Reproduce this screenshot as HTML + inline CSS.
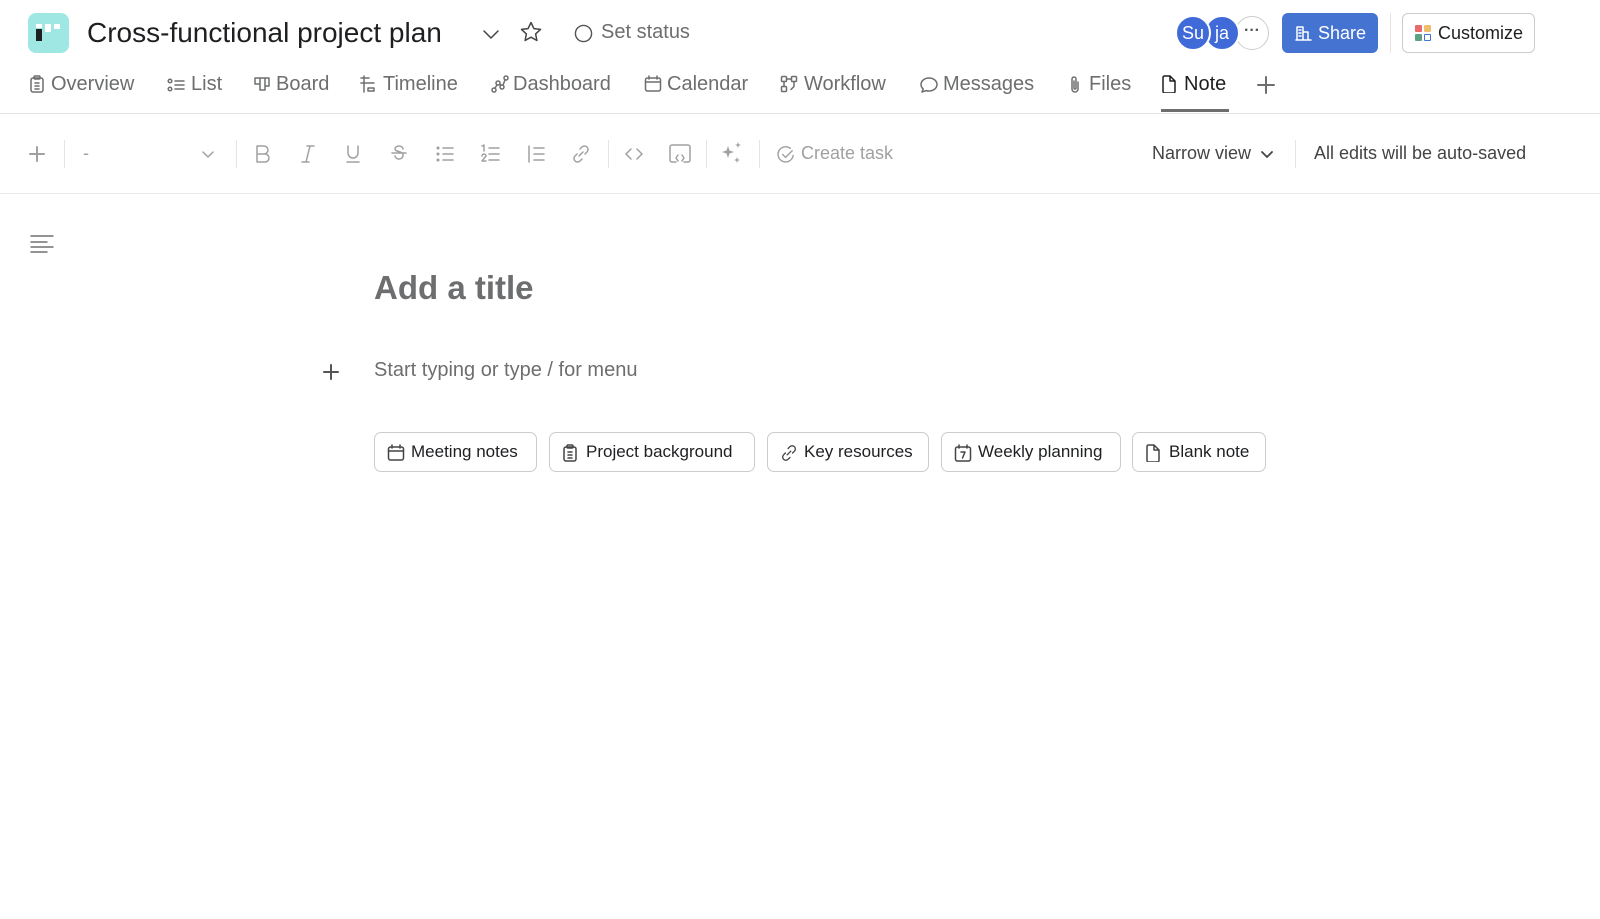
<!DOCTYPE html>
<html><head><meta charset="utf-8"><style>
*{margin:0;padding:0;box-sizing:border-box}
body{width:1600px;height:919px;background:#fff;font-family:"Liberation Sans",sans-serif;position:relative;overflow:hidden;color:#1e1f21}
.a{position:absolute;white-space:nowrap}
.tab{position:absolute;top:72px;font-size:20px;color:#6d6e6f;line-height:24px}
.ic{position:absolute}
svg{fill:none;stroke:currentColor;stroke-width:1.5;stroke-linecap:round;stroke-linejoin:round}
.tb{position:absolute;top:142px;color:#a2a0a2}
.sep{position:absolute;width:1px;background:#e6e4e4}
.chip{position:absolute;top:432px;height:40px;border:1px solid #cfcbcb;border-radius:7px;font-size:17px;color:#1e1f21;line-height:38px;padding-left:36px}
.chip svg{position:absolute;left:12px;top:11px;color:#444}
</style></head><body>
<!-- logo -->
<div class="a" style="left:28px;top:13px;width:41px;height:40px;background:#9ee7e3;border-radius:8px"></div>
<div class="a" style="left:36px;top:29px;width:6px;height:12px;background:#1e1f21"></div>
<div class="a" style="left:36px;top:24px;width:6px;height:4px;background:#fff"></div>
<div class="a" style="left:45px;top:24px;width:6px;height:8px;background:#fff"></div>
<div class="a" style="left:54px;top:24px;width:6px;height:5px;background:#fff"></div>
<div class="a" style="left:87px;top:16px;font-size:28px;line-height:34px;color:#1e1f21">Cross-functional project plan</div>
<svg class="ic" style="left:481px;top:24px;color:#444" width="20" height="20" viewBox="0 0 20 20"><path d="M3 7l7 7 7-7"/></svg>
<svg class="ic" style="left:519px;top:20px;color:#444" width="24" height="24" viewBox="0 0 24 24"><path d="M12 2.5l2.9 6.1 6.6.8-4.9 4.5 1.3 6.6L12 17.2l-5.9 3.3 1.3-6.6-4.9-4.5 6.6-.8z"/></svg>
<svg class="ic" style="left:574px;top:24px;color:#555" width="19" height="19" viewBox="0 0 20 20"><circle cx="10" cy="10" r="8.5"/></svg>
<div class="a" style="left:601px;top:21px;font-size:20px;color:#6d6e6f">Set status</div>
<!-- avatars -->
<div class="a" style="left:1235px;top:16px;width:34px;height:34px;border-radius:50%;border:1px solid #ccc;background:#fff;text-align:center;line-height:28px;font-size:16px;color:#555;font-weight:bold">···</div>
<div class="a" style="left:1204px;top:15px;width:36px;height:36px;border-radius:50%;background:#3f6ad8;border:2px solid #fff;color:#fff;text-align:center;line-height:32px;font-size:18px">ja</div>
<div class="a" style="left:1175px;top:15px;width:36px;height:36px;border-radius:50%;background:#3f6ad8;border:2px solid #fff;color:#fff;text-align:center;line-height:32px;font-size:18px">Su</div>
<div class="a" style="left:1282px;top:13px;width:96px;height:40px;border-radius:6px;background:#4573d2;color:#fff;font-size:18px;line-height:40px;padding-left:36px">Share</div>
<svg class="ic" style="left:1295px;top:25px" width="17" height="16" viewBox="0 0 17 16"><path d="M2 15V2h6v13M8 7h5v8M1 15h15M4 5h2M4 8h2M4 11h2" style="stroke:#fff"/></svg>
<div class="sep" style="left:1390px;top:13px;height:40px"></div>
<div class="a" style="left:1402px;top:13px;width:133px;height:40px;border:1px solid #cfcbcb;border-radius:6px;font-size:18px;line-height:38px;padding-left:35px">Customize</div>
<div class="a" style="left:1415px;top:25px;width:7px;height:7px;background:#e86a6a;border-radius:1px"></div>
<div class="a" style="left:1424px;top:25px;width:7px;height:7px;background:#f1bd6c;border-radius:1px"></div>
<div class="a" style="left:1415px;top:34px;width:7px;height:7px;background:#5da283;border-radius:1px"></div>
<div class="a" style="left:1424px;top:34px;width:7px;height:7px;border:1.5px solid #4573d2;border-radius:1px"></div>
<!-- tabs -->
<svg class="ic" style="left:29px;top:75px;color:#6d6e6f" width="16" height="18" viewBox="0 0 16 18"><rect x="2" y="3" width="12" height="14" rx="2"/><rect x="5" y="1" width="6" height="3" rx="1"/><path d="M6 8h4M6 11h4M6 14h4"/></svg>
<div class="tab" style="left:51px">Overview</div>
<svg class="ic" style="left:167px;top:77px;color:#6d6e6f" width="18" height="16" viewBox="0 0 18 16"><circle cx="3" cy="4" r="1.8"/><circle cx="3" cy="12" r="1.8"/><path d="M8 4h9M8 12h9M8 8h9"/></svg>
<div class="tab" style="left:191px">List</div>
<svg class="ic" style="left:253px;top:76px;color:#6d6e6f" width="18" height="16" viewBox="0 0 18 16"><path d="M2 2h14v8h-4v4H7v-6H2z M7 2v6M12 2v8"/></svg>
<div class="tab" style="left:276px">Board</div>
<svg class="ic" style="left:359px;top:75px;color:#6d6e6f" width="18" height="18" viewBox="0 0 18 18"><path d="M5 1v16M2 3h8M5 8h10M9 13h6v3H9zM2 8h3"/></svg>
<div class="tab" style="left:383px">Timeline</div>
<svg class="ic" style="left:491px;top:75px;color:#6d6e6f" width="18" height="18" viewBox="0 0 18 18"><circle cx="3" cy="15" r="2"/><circle cx="7" cy="8" r="2"/><circle cx="11" cy="12" r="2"/><circle cx="15" cy="3" r="2"/><path d="M4 13l2-3M9 9l1 1M12 10l2-5"/></svg>
<div class="tab" style="left:513px">Dashboard</div>
<svg class="ic" style="left:644px;top:75px;color:#6d6e6f" width="18" height="18" viewBox="0 0 18 18"><rect x="1.5" y="3" width="15" height="13" rx="2"/><path d="M1.5 7h15M5 1v3M13 1v3"/></svg>
<div class="tab" style="left:667px">Calendar</div>
<svg class="ic" style="left:780px;top:75px;color:#6d6e6f" width="18" height="18" viewBox="0 0 18 18"><rect x="1.5" y="1.5" width="5" height="5" rx="1"/><rect x="11.5" y="1.5" width="5" height="5" rx="1"/><rect x="1.5" y="11.5" width="5" height="5" rx="1"/><path d="M6.5 4h5M14 6.5v5l-3 3M4 6.5v5"/></svg>
<div class="tab" style="left:804px">Workflow</div>
<svg class="ic" style="left:920px;top:76px;color:#6d6e6f" width="18" height="18" viewBox="0 0 18 18"><path d="M9 2c4.4 0 8 2.8 8 6.5S13.4 15 9 15c-1 0-2-.1-3-.4L2 16l1.2-3C1.8 11.8 1 10.2 1 8.5 1 4.8 4.6 2 9 2z"/></svg>
<div class="tab" style="left:943px">Messages</div>
<svg class="ic" style="left:1068px;top:75px;color:#6d6e6f" width="14" height="19" viewBox="0 0 14 19"><path d="M10 7v7a3 3 0 01-6 0V4a2 2 0 014 0v9a1 1 0 01-2 0V6"/></svg>
<div class="tab" style="left:1089px">Files</div>
<svg class="ic" style="left:1161px;top:75px;color:#1e1f21" width="16" height="18" viewBox="0 0 16 18"><path d="M2 2.5a1.5 1.5 0 011.5-1.5H9l5 5v10.5a1.5 1.5 0 01-1.5 1.5h-9A1.5 1.5 0 012 16.5zM9 1v5h5"/></svg>
<div class="tab" style="left:1184px;color:#1e1f21">Note</div>
<div class="a" style="left:1161px;top:109px;width:68px;height:3px;background:#6d6e6f"></div>
<svg class="ic" style="left:1256px;top:75px;color:#6d6e6f" width="20" height="20" viewBox="0 0 20 20"><path d="M10 2v16M2 10h16" style="stroke-width:2"/></svg>
<div class="a" style="left:0;top:113px;width:1600px;height:1px;background:#e6e4e4"></div>
<!-- toolbar -->
<svg class="tb" style="left:28px;top:145px" width="18" height="18" viewBox="0 0 18 18"><path d="M9 2v14M2 9h14" style="stroke-width:2"/></svg>
<div class="sep" style="left:64px;top:140px;height:28px"></div>
<div class="a" style="left:83px;top:143px;font-size:18px;color:#a2a0a2">-</div>
<svg class="tb" style="left:200px;top:146px" width="16" height="16" viewBox="0 0 16 16"><path d="M3 6l5 5 5-5"/></svg>
<div class="sep" style="left:236px;top:140px;height:28px"></div>
<svg class="tb" style="left:253px;top:144px" width="20" height="20" viewBox="0 0 20 20"><path d="M4 2h7a4 4 0 010 8H4zM4 10h8a4 4 0 010 8H4z"/></svg>
<svg class="tb" style="left:298px;top:144px" width="20" height="20" viewBox="0 0 20 20"><path d="M9 2h7M4 18h7M12 2L8 18"/></svg>
<svg class="tb" style="left:343px;top:144px" width="20" height="20" viewBox="0 0 20 20"><path d="M5 2v7a5 5 0 0010 0V2M4 18h12"/></svg>
<svg class="tb" style="left:389px;top:144px" width="20" height="20" viewBox="0 0 20 20"><path d="M14 5a4 3 0 00-8 0c0 3 8 2 8 6a4 3.5 0 01-8 1M3 9h14"/></svg>
<svg class="tb" style="left:435px;top:144px" width="20" height="20" viewBox="0 0 20 20"><circle cx="3" cy="4" r=".8"/><circle cx="3" cy="10" r=".8"/><circle cx="3" cy="16" r=".8"/><path d="M8 4h10M8 10h10M8 16h10"/></svg>
<svg class="tb" style="left:480px;top:144px" width="20" height="20" viewBox="0 0 20 20"><path d="M2 2l2-1v6M2 12a2 2 0 014 0L2 17h4M9 4h10M9 10h10M9 16h10"/></svg>
<svg class="tb" style="left:526px;top:144px" width="20" height="20" viewBox="0 0 20 20"><path d="M3 2v16M8 4h10M8 10h10M8 16h10"/></svg>
<svg class="tb" style="left:571px;top:144px" width="20" height="20" viewBox="0 0 20 20"><path d="M8 12l4-4M9 5l2-2a3.5 3.5 0 015 5l-2 2M11 15l-2 2a3.5 3.5 0 01-5-5l2-2"/></svg>
<div class="sep" style="left:608px;top:140px;height:28px"></div>
<svg class="tb" style="left:624px;top:144px" width="20" height="20" viewBox="0 0 20 20"><path d="M7 5L2 10l5 5M13 5l5 5-5 5"/></svg>
<svg class="tb" style="left:668px;top:143px" width="24" height="22" viewBox="0 0 24 22"><path d="M8 19H4a2 2 0 01-2-2V4a2 2 0 012-2h16a2 2 0 012 2v13a2 2 0 01-2 2h-4M10 12l-2 3 2 3M14 12l2 3-2 3"/></svg>
<div class="sep" style="left:706px;top:140px;height:28px"></div>
<svg class="tb" style="left:720px;top:141px;fill:#a2a0a2;stroke:none" width="24" height="26" viewBox="0 0 24 26"><path d="M8 5l1.5 4.5L14 11l-4.5 1.5L8 17l-1.5-4.5L2 11l4.5-1.5zM18 1l.8 2.2L21 4l-2.2.8L18 7l-.8-2.2L15 4l2.2-.8zM17 16l.8 2.2L20 19l-2.2.8L17 22l-.8-2.2L14 19l2.2-.8z"/></svg>
<div class="sep" style="left:759px;top:140px;height:28px"></div>
<svg class="tb" style="left:777px;top:145px" width="19" height="19" viewBox="0 0 20 20"><path d="M17 11a8 8 0 11-3-7.5M6 10l3 3 7-7"/></svg>
<div class="a" style="left:801px;top:143px;font-size:18px;color:#a2a0a2">Create task</div>
<div class="a" style="left:1152px;top:143px;font-size:18px;color:#444">Narrow view</div>
<svg class="ic" style="left:1260px;top:147px;color:#444" width="14" height="14" viewBox="0 0 14 14"><path d="M2 5l5 5 5-5" style="stroke-width:1.8"/></svg>
<div class="sep" style="left:1295px;top:140px;height:28px"></div>
<div class="a" style="left:1314px;top:143px;font-size:18px;color:#444">All edits will be auto-saved</div>
<div class="a" style="left:0;top:193px;width:1600px;height:1px;background:#ece8e8"></div>
<!-- body -->
<svg class="ic" style="left:30px;top:234px;color:#555" width="24" height="20" viewBox="0 0 24 20"><path d="M1 2h22M1 8h16M1 13h22M1 18h16" style="stroke-width:1.3"/></svg>
<div class="a" style="left:374px;top:268px;font-size:33px;color:#6d6e6f;font-weight:bold;line-height:40px">Add a title</div>
<svg class="ic" style="left:322px;top:363px;color:#555" width="18" height="18" viewBox="0 0 18 18"><path d="M9 2v14M2 9h14" style="stroke-width:2"/></svg>
<div class="a" style="left:374px;top:359px;font-size:20px;color:#6d6e6f">Start typing or type / for menu</div>
<div class="chip" style="left:374px;width:163px"><svg width="18" height="18" viewBox="0 0 18 18"><rect x="1.5" y="3" width="15" height="13" rx="2"/><path d="M1.5 7h15M5 1v3M13 1v3"/></svg>Meeting notes</div>
<div class="chip" style="left:549px;width:206px"><svg width="16" height="18" viewBox="0 0 16 18"><rect x="2" y="3" width="12" height="14" rx="2"/><rect x="5" y="1" width="6" height="3" rx="1"/><path d="M6 8h4M6 11h4M6 14h4"/></svg>Project background</div>
<div class="chip" style="left:767px;width:162px"><svg width="18" height="18" viewBox="0 0 20 20"><path d="M8 12l4-4M9 5l2-2a3.5 3.5 0 015 5l-2 2M11 15l-2 2a3.5 3.5 0 01-5-5l2-2"/></svg>Key resources</div>
<div class="chip" style="left:941px;width:180px"><svg width="18" height="18" viewBox="0 0 18 18"><rect x="1.5" y="3" width="15" height="14" rx="2"/><path d="M5 1v3M13 1v3M7 8h4l-2.5 6"/></svg>Weekly planning</div>
<div class="chip" style="left:1132px;width:134px"><svg width="16" height="18" viewBox="0 0 16 18"><path d="M2 2.5a1.5 1.5 0 011.5-1.5H9l5 5v10.5a1.5 1.5 0 01-1.5 1.5h-9A1.5 1.5 0 012 16.5zM9 1v5h5"/></svg>Blank note</div>
</body></html>
